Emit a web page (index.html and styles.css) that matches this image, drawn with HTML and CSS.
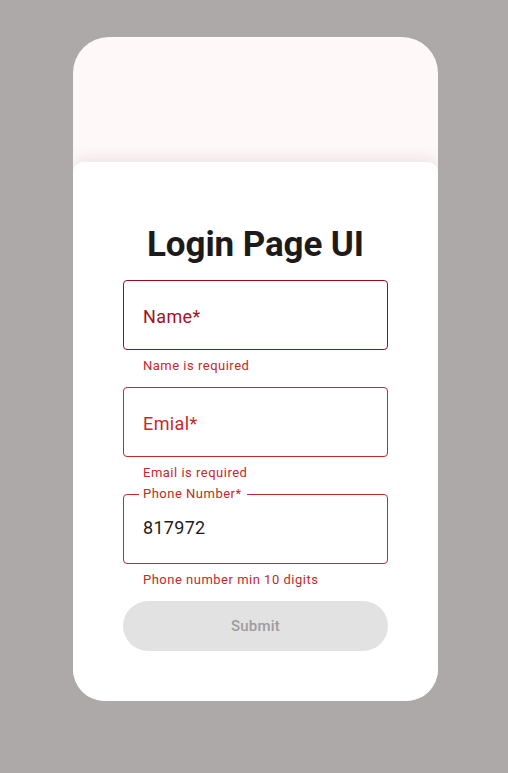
FILE: index.html
```html
<!DOCTYPE html>
<html>
<head>
<meta charset="utf-8">
<link rel="stylesheet" href="styles.css">
</head>
<body>
<div class="page">
  <div class="phone">
    <div class="header"></div>
    <div class="card">
      <h1 class="title">Login Page UI</h1>
      <div class="field field-focus">
        <div class="box box-focus"><span class="placeholder placeholder-focus">Name*</span></div>
        <div class="helper">Name is required</div>
      </div>
      <div class="field">
        <div class="box"><span class="placeholder">Emial*</span></div>
        <div class="helper">Email is required</div>
      </div>
      <div class="field">
        <div class="box box-filled"><span class="float-label">Phone Number*</span><span class="value">817972</span></div>
        <div class="helper">Phone number min 10 digits</div>
      </div>
      <button class="submit">Submit</button>
    </div>
  </div>
</div>
</body>
</html>
```

FILE: styles.css
```css
* { box-sizing: border-box; }
html, body { margin: 0; padding: 0; }
body {
  background: #aca9a8;
  font-family: Roboto, "Noto Sans", sans-serif;
  width: 508px;
  height: 773px;
}
.page {
  padding-top: 37px;
  padding-left: 73px;
}
.phone {
  width: 365px;
  height: 664px;
  background: #fef8f8;
  border-radius: 36px 36px 32px 32px;
  display: flex;
  flex-direction: column;
  overflow: hidden;
}
.header {
  height: 125px;
  flex: none;
}
.card {
  flex: 1;
  background: #ffffff;
  border-radius: 10px 10px 0 0;
  box-shadow: 0 -4px 14px rgba(120, 90, 90, 0.12);
  padding: 63px 50px 0 50px;
  display: flex;
  flex-direction: column;
}
.title {
  margin: 0 0 15px 0;
  font-size: 35px;
  line-height: 40px;
  font-weight: 700;
  color: #1d1a1b;
  text-align: center;
  letter-spacing: -0.1px;
}
.field {
  display: flex;
  flex-direction: column;
}
.box {
  position: relative;
  height: 70px;
  border: 1px solid #c62828;
  border-radius: 4px;
  display: flex;
  align-items: center;
  padding-left: 19px;
  padding-top: 2px;
}
.box-focus {
  border-color: #9b0f1b;
}
.placeholder {
  font-size: 18px;
  color: #c62828;
  letter-spacing: 0.4px;
}
.placeholder-focus {
  color: #a5121e;
}
.box-filled {
  padding-top: 0;
  padding-bottom: 4px;
}
.value {
  font-size: 18px;
  color: #1f1b1c;
  letter-spacing: 0.3px;
}
.float-label {
  position: absolute;
  left: 15px;
  top: -9px;
  padding: 0 5px 0 4px;
  background: #ffffff;
  font-size: 13px;
  line-height: 16px;
  color: #c62828;
  letter-spacing: 0.5px;
}
.helper {
  height: 37px;
  padding: 8px 0 0 20px;
  font-size: 13px;
  line-height: 16px;
  color: #c62828;
  letter-spacing: 0.5px;
}
.submit {
  height: 50px;
  border: none;
  border-radius: 25px;
  background: #e2e2e2;
  color: #9e9c9c;
  font-family: Roboto, "Noto Sans", sans-serif;
  font-size: 15px;
  font-weight: 500;
  letter-spacing: 0.2px;
  padding: 0;
}
```
